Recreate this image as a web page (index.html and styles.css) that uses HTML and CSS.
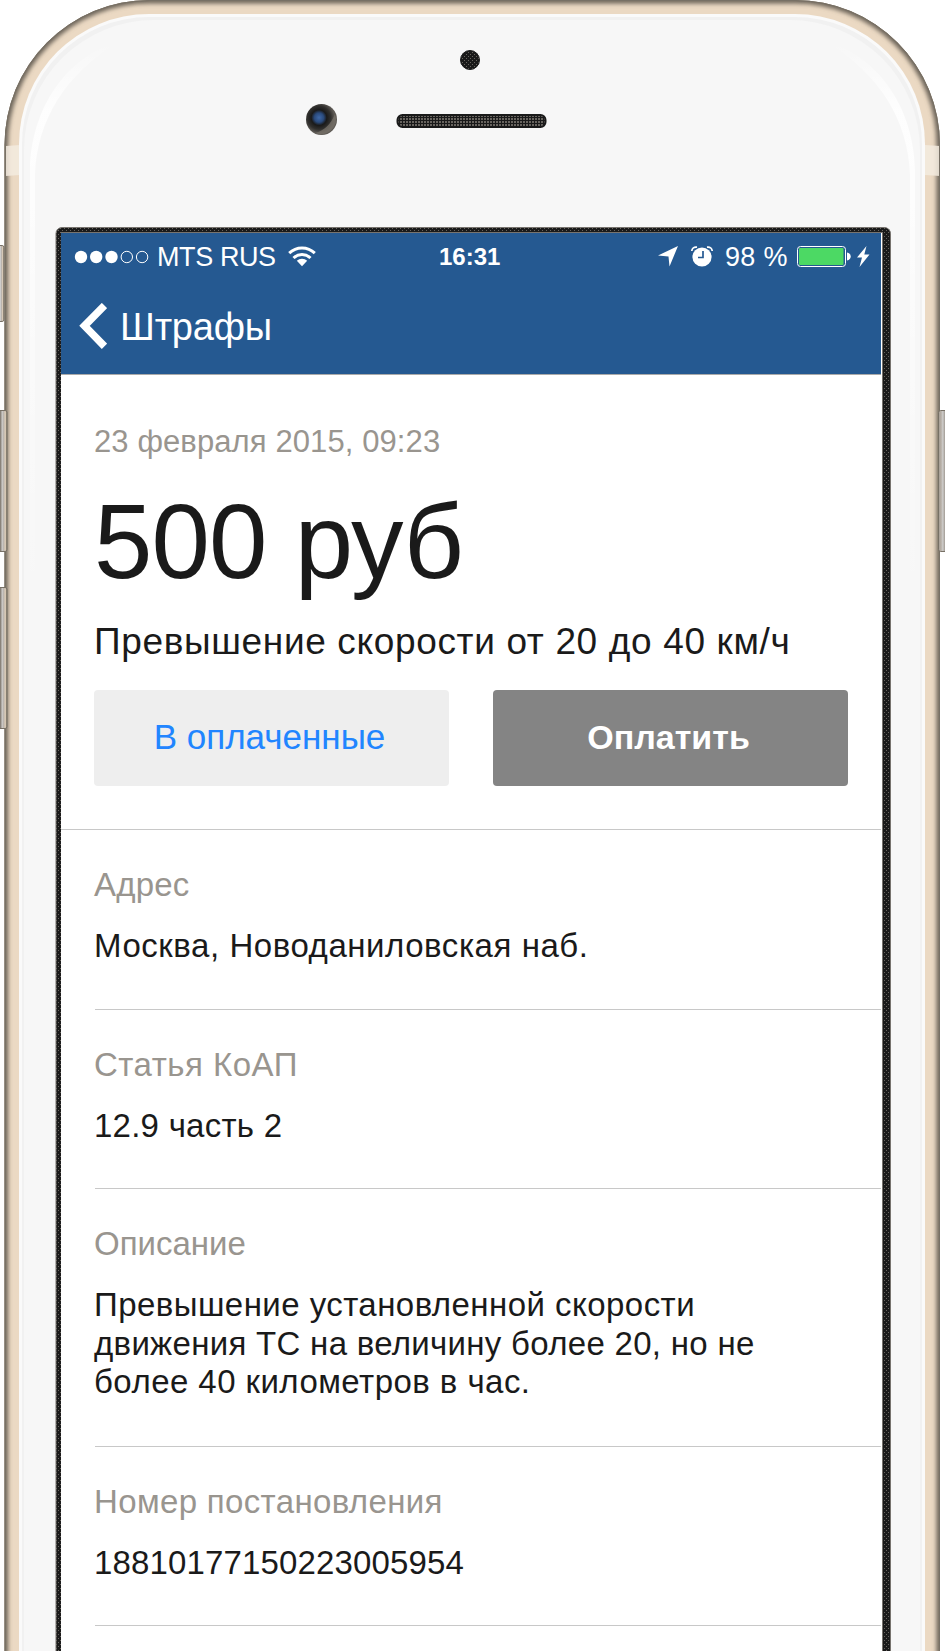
FILE: index.html
```
<!DOCTYPE html>
<html lang="ru">
<head>
<meta charset="utf-8">
<title>Штрафы</title>
<link rel="stylesheet" href="styles.css">
</head>
<body>
<div class="phone">
  <svg class="frame" viewBox="0 0 945 1651" width="945" height="1651" aria-hidden="true">
    <defs>
      <pattern id="mesh" width="4" height="4" patternUnits="userSpaceOnUse"><path fill="#1a1a1a" d="M0 0h4v4H0z"/><path fill="#68645f" d="M0 0h1v1H0zM2 2h1v1H2z"/></pattern>
      <pattern id="grille" width="3" height="3" patternUnits="userSpaceOnUse"><path fill="#68645f" d="M0 0h3v3H0z"/><path fill="#1a1a1a" d="M0 0h1v3H0zM0 0h3v1H0z"/></pattern>
      <linearGradient id="key"><stop offset="0" stop-color="#6e675e"/><stop offset=".45" stop-color="#8d867d"/><stop offset=".55" stop-color="#d0cfce"/><stop offset=".7" stop-color="#b9b2aa"/><stop offset=".85" stop-color="#e0d0bb"/><stop offset="1" stop-color="#777065"/></linearGradient>
      <linearGradient id="key-right"><stop offset="0" stop-color="#a39a90"/><stop offset=".25" stop-color="#b9b2aa"/><stop offset=".4" stop-color="#d0cfce"/><stop offset=".5" stop-color="#b0aba5"/><stop offset="1" stop-color="#777065"/></linearGradient>
      <linearGradient id="shine" x1="0" y1="0" x2="0" y2="1"><stop offset="0" stop-color="#fff" stop-opacity="0"/><stop offset=".12" stop-color="#fff" stop-opacity=".85"/><stop offset=".25" stop-color="#fff" stop-opacity=".8"/><stop offset=".45" stop-color="#fff" stop-opacity=".5"/><stop offset="1" stop-color="#fff" stop-opacity="0"/></linearGradient>
      <radialGradient id="lens" cx=".42" cy=".44"><stop offset="0" stop-color="#3f69a8"/><stop offset=".3" stop-color="#2a4a7c"/><stop offset=".5" stop-color="#1a1a1a"/><stop offset=".75" stop-color="#302f2d"/><stop offset="1" stop-color="#5d5954"/></radialGradient>
      <filter id="soft" x="-5%" y="-5%" width="110%" height="110%"><feGaussianBlur stdDeviation="2"/></filter>
      <clipPath id="body"><path d="M4.500 1700V145A145 145 0 0 1 149.500 0H795A145 145 0 0 1 940 145V1700z"/></clipPath>
    </defs>
    <g clip-path="url(#body)">
      <path fill="#ebd9c3" d="M0 0h945v1651H0z"/>
      <path fill="none" stroke="#6d655a" stroke-width="9" filter="url(#soft)" d="M3.500 1700V145A146 146 0 0 1 149.500-1H795A146 146 0 0 1 941 145V1700"/>
      <path fill="#f3ebdf" fill-opacity=".85" d="M6 146l14-1v30l-14 1zM925 145l16 1v30l-16-1z"/>
      <path fill="none" stroke="#777065" stroke-width="2" d="M4.500 1700V145A145 145 0 0 1 149.500 0H795A145 145 0 0 1 940 145V1700"/>
    </g>
    <g fill="url(#key)" stroke="#777065" stroke-width="1">
      <rect x="-4" y="245.500" width="8" height="76" rx="2"/>
      <rect x="-4" y="410.500" width="11" height="141" rx="2"/>
      <rect x="-4" y="587.500" width="11" height="141" rx="2"/>
      <rect x="938.500" y="410.500" width="11" height="141" rx="2" fill="url(#key-right)"/>
    </g>
    <path fill="#fafafa" d="M19 1700V144A130 130 0 0 1 149 14H795A130 130 0 0 1 925 144V1700z"/>
    <path fill="#f1f1f1" d="M22 1700V144A127 127 0 0 1 149 17H795A127 127 0 0 1 922 144V1700z"/>
    <path fill="#f7f7f7" d="M24 1700V150A130 130 0 0 1 154 20H790A130 130 0 0 1 920 150V1700z"/>
    <path fill="url(#shine)" d="M118 42C65 57 31 110 30 170V610H35V175C37 120 65 75 118 42zM827 42C880 57 914 110 915 170V610H910V175C908 120 880 75 827 42z"/>
    <circle cx="470" cy="60" r="9.500" fill="url(#mesh)" stroke="#1a1a1a"/>
    <circle cx="321.500" cy="119.500" r="15.500" fill="url(#lens)"/>
    <path fill="#77716a" fill-opacity=".75" d="M335 114a15 15 0 0 1-20 19c9-2 16-9 20-19z"/>
    <rect x="397.500" y="115" width="148" height="12" rx="5" fill="url(#grille)" stroke="#1a1a1a" stroke-width="2"/>
    <rect x="56" y="227.500" width="834.500" height="1500" rx="6" fill="url(#mesh)" stroke="#77736e" stroke-width="1"/>
    <path fill="#77736e" d="M60 232h823v1h-823zM882 233h1v1418h-1z"/>
  </svg>

  <main class="screen">
    <header class="header">
      <div class="status">
        <svg class="signal" width="75" height="14" viewBox="0 0 75 14"><g fill="#fff"><circle cx="7" cy="7" r="6.200"/><circle cx="22.200" cy="7" r="6.200"/><circle cx="37.500" cy="7" r="6.200"/></g><g fill="none" stroke="#fff"><circle cx="52.800" cy="7" r="5.700"/><circle cx="68.100" cy="7" r="5.700"/></g></svg>
        <span class="carrier">MTS RUS</span>
        <svg class="wifi" width="28" height="21" viewBox="0 0 28 21"><path fill="none" stroke="#fff" stroke-width="3" d="M1.200 7.200a18.500 18.500 0 0 1 25.600 0M5.500 12a12.300 12.300 0 0 1 17 0"/><path fill="#fff" d="M8.800 14.800a7.700 7.700 0 0 1 10.400 0L14 20.300z"/></svg>
        <span class="clock">16:31</span>
        <svg class="arrow" width="20" height="21" viewBox="0 0 20 21"><path fill="#fff" d="M20 0L11.500 20.500 10.500 10.500 0 9.500z"/></svg>
        <svg class="alarm" width="22" height="21" viewBox="0 0 22 21"><circle cx="11" cy="11" r="9.600" fill="#fff"/><path fill="none" stroke="#fff" stroke-width="1.700" d="M.8 5C1 2 3 .8 6 1.200M21.200 5C21 2 19 .8 16 1.200"/><path fill="none" stroke="#255991" stroke-width="1.700" d="M12 5v6.500H7"/></svg>
        <span class="percent">98 %</span>
        <svg class="battery" width="54" height="21" viewBox="0 0 54 21"><rect x=".5" y=".5" width="48" height="20" rx="3" fill="none" stroke="#fff"/><rect x="2" y="2" width="44.500" height="17" rx="1" fill="#4cd964"/><path fill="#fff" d="M50 6.500c5 1 5 7 0 8z"/></svg>
        <svg class="bolt" width="13" height="21" viewBox="0 0 13 21"><path fill="#fff" d="M9.500 0L0 11.500h5L2.500 21 12.500 8.500H7.300z"/></svg>
      </div>
      <nav class="nav">
        <svg class="back" width="28" height="46" viewBox="0 0 28 46"><path fill="none" stroke="#fff" stroke-width="7.500" d="M25.500 2.500L5.500 22.800l20 20.500"/></svg>
        <span class="nav-title">Штрафы</span>
      </nav>
    </header>

    <section class="summary">
      <div class="date">23 февраля 2015, 09:23</div>
      <h1 class="amount">500 руб</h1>
      <div class="reason">Превышение скорости от 20 до 40 км/ч</div>
      <div class="actions">
        <button class="button">В оплаченные</button>
        <button class="button button-pay">Оплатить</button>
      </div>
    </section>

    <dl class="details">
      <div class="row address"><dt>Адрес</dt><dd>Москва, Новоданиловская наб.</dd></div>
      <div class="row article"><dt>Статья КоАП</dt><dd>12.9 часть 2</dd></div>
      <div class="row description"><dt>Описание</dt><dd>Превышение установленной скорости<br><span class="dense">движения ТС на величину более 20, но не</span><br>более 40 километров в час.</dd></div>
      <div class="row number"><dt>Номер постановления</dt><dd>18810177150223005954</dd></div>
    </dl>
  </main>
</div>
</body>
</html>
```
FILE: styles.css
```
* { box-sizing: border-box; }
body { margin: 0; background: #fff; font-family: "Liberation Sans", Arial, sans-serif; color: #1a1a1a; }
.phone { position: relative; width: 945px; height: 1651px; overflow: hidden; padding: 233px 0 0 61px; }
.frame { position: absolute; left: 0; top: 0; }
.screen { position: relative; width: 821px; height: 1418px; background: #fff; overflow: hidden; white-space: nowrap; }
.header { width: 820px; height: 142px; background: #255991; border-bottom: 1px solid #aaa; color: #fff; }
.status { display: flex; align-items: center; height: 47px; padding-left: 13px; font-size: 27px; line-height: 45px; }
.status svg { flex: none; }
.status span { padding-top: 2px; }
.carrier { width: 118px; margin-left: 8px; letter-spacing: -.4px; }
.wifi { margin-left: 13px; }
.status .clock { width: 62px; margin-left: 123px; padding-top: 0; font-size: 24px; font-weight: 700; }
.arrow { margin-left: 157px; }
.alarm { margin-left: 13px; }
.percent { width: 64px; margin-left: 12px; letter-spacing: .3px; }
.battery { margin-left: 8px; }
.bolt { margin-left: 6px; }
.nav { display: flex; align-items: center; height: 92px; padding-left: 18px; }
.nav-title { margin-left: 13px; padding-top: 2px; font-size: 38px; letter-spacing: -.2px; }
.summary { height: 455px; width: 820px; padding: 46px 33px 0; border-bottom: 1px solid #c8c8c8; }
.date { height: 42px; line-height: 42px; font-size: 31px; color: #99958f; letter-spacing: .1px; }
.amount { margin: 19px 0 0; height: 120px; line-height: 120px; font-size: 105px; font-weight: 400; letter-spacing: -.9px; }
.reason { margin-top: 16px; height: 48px; line-height: 48px; font-size: 37px; letter-spacing: .65px; }
.actions { display: flex; gap: 44px; margin-top: 24px; }
.button { width: 355px; height: 96px; border: 0; border-radius: 4px; padding: 0 4px 2px 0; background: #eee; color: #2185ff; font: 35px "Liberation Sans", Arial, sans-serif; }
.button-pay { background: #848484; color: #fff; font-size: 34px; font-weight: 700; padding-bottom: 1px; }
.details { margin: 0; padding-left: 34px; width: 820px; }
.row { height: 179px; padding-top: 34px; border-bottom: 1px solid #c8c8c8; }
.row dt, .row dd { margin-left: -1px; font-size: 33px; line-height: 38.7px; }
.row dt { height: 42px; line-height: 42px; color: #99958f; }
.row dd { margin-top: 21px; }
.address { height: 180px; }
.address dt { letter-spacing: .2px; }
.address dd { letter-spacing: .55px; }
.article dt { letter-spacing: .5px; }
.article dd { letter-spacing: .25px; }
.description { height: 258px; }
.description dd { letter-spacing: .45px; }
.dense { letter-spacing: .3px; }
.number dt { letter-spacing: .35px; }
.number dd { letter-spacing: .15px; }
```
